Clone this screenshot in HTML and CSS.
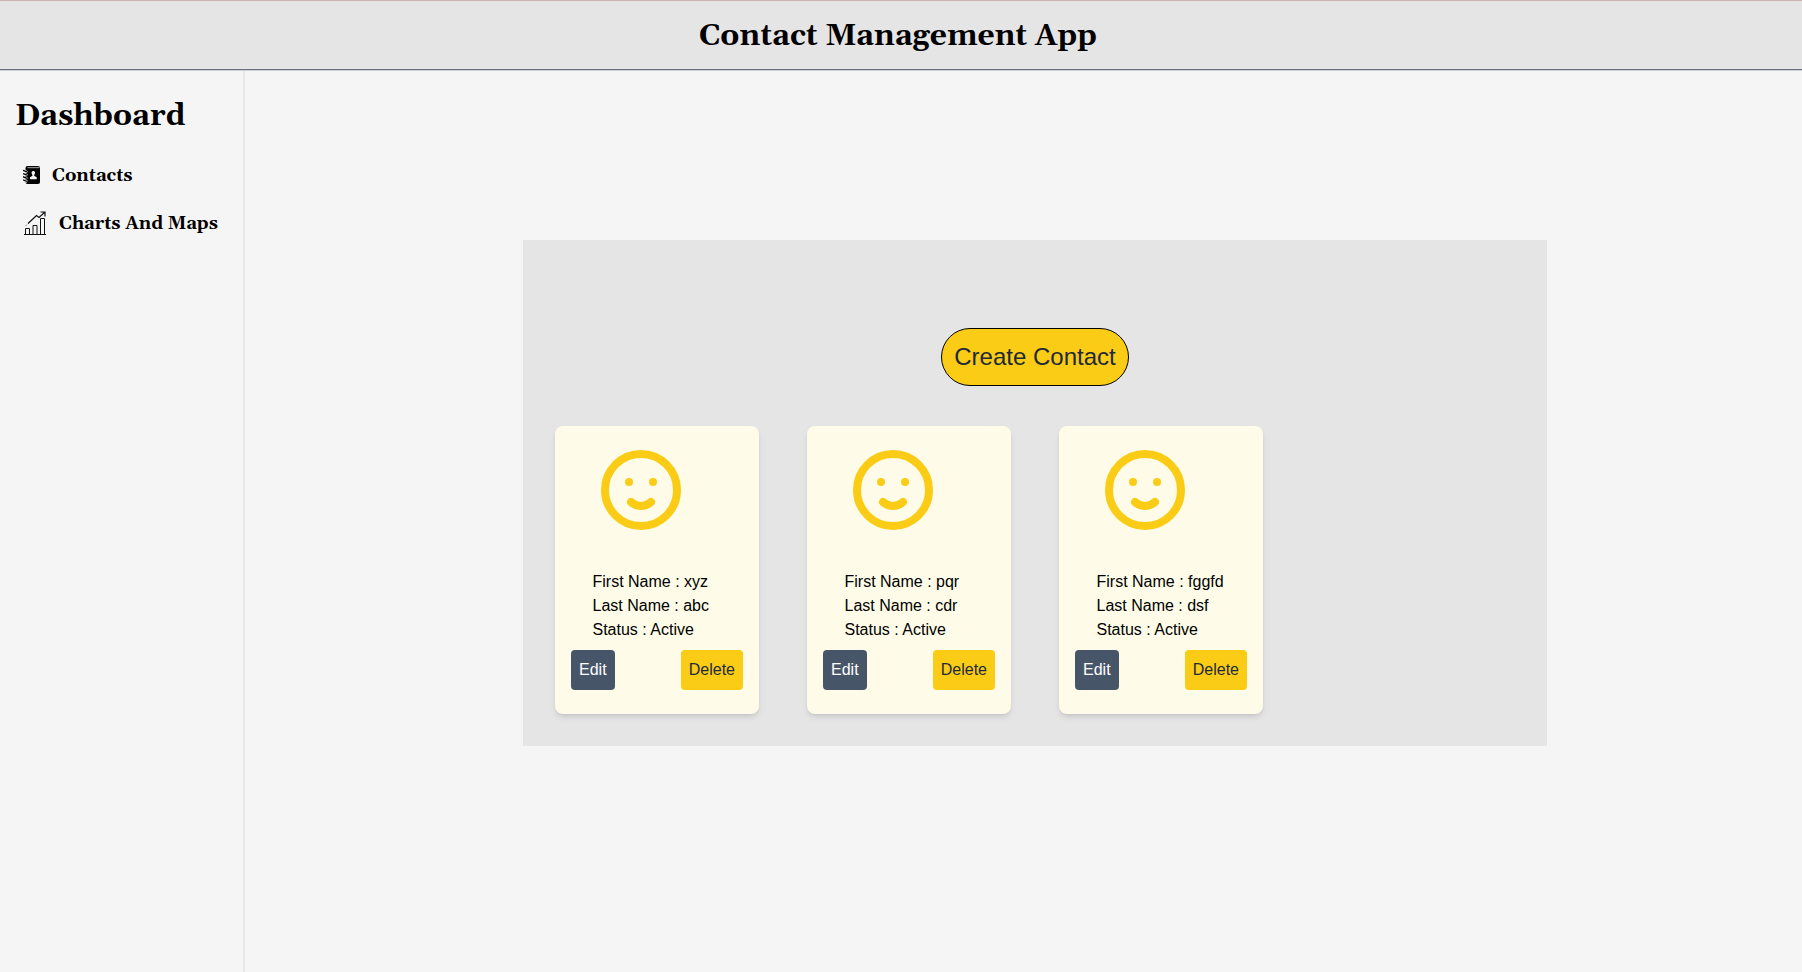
FILE: index.html
```html
<!DOCTYPE html>
<html lang="en">
<head>
<meta charset="utf-8">
<title>Contact Management App</title>
<link rel="stylesheet" href="styles.css">
</head>
<body>
<svg class="defs" width="0" height="0" aria-hidden="true">
  <symbol id="smile" viewBox="0 0 80 80">
    <circle cx="40" cy="40" r="36" fill="none" stroke="currentColor" stroke-width="8"/>
    <circle cx="28" cy="32" r="4" fill="currentColor"/>
    <circle cx="52" cy="32" r="4" fill="currentColor"/>
    <path d="M30 52a14.500 14.500 0 0 0 20 0" fill="none" stroke="currentColor" stroke-width="8" stroke-linecap="round"/>
  </symbol>
</svg>
<header class="header"><h1 class="title">Contact Management App</h1></header>
<div class="layout">
  <aside class="sidebar">
    <h2 class="sidebar-title">Dashboard</h2>
    <nav class="nav">
      <a class="nav-item">
        <svg class="icon-book" viewBox="0 0 18 18">
          <path d="M4.500 0H15a2 2 0 0 1 2 2v14a2 2 0 0 1-2 2H4.500a2 2 0 0 1-2-2V2a2 2 0 0 1 2-2z" fill="#000"/>
          <path d="M4.500 1.700h12" stroke="#f5f5f5" stroke-width=".7"/>
          <path d="M0 4.500l4.300 1.600M0 7.700l4.300 1.600M0 10.900l4.300 1.600M0 14.100l4.300 1.600" stroke="#f5f5f5" stroke-width="2.300"/>
          <path d="M0 4.300l4 1.600M0 7.500l4 1.600M0 10.700l4 1.600M0 13.900l4 1.600" stroke="#000" stroke-width="1.300"/>
          <path d="M10.300 5a1.800 1.800 0 0 1 1.300 3l-.5 1.700 2.600 1.500v2H7v-2l2.500-1.500L9 8a1.800 1.800 0 0 1 1.300-3z" fill="#f5f5f5"/>
        </svg>
        <span class="label">Contacts</span>
      </a>
      <a class="nav-item nav-charts">
        <svg class="icon-chart" viewBox="0 0 24 24" fill="none" stroke="#111" stroke-width="1">
          <path d="M1 23.500h22M2.500 23v-5.500h4V23M10 23v-8.500h4V23M17.500 23V7.500h4V23"/>
          <path d="M5 12.500l8.500-8 2.500 2L22 1M17.500 1h4.500v4.500" stroke-width="1.200"/>
          <path d="M3 14.500l.7-.7"/>
        </svg>
        <span class="label">Charts And Maps</span>
      </a>
    </nav>
  </aside>
  <main class="main">
    <section class="panel">
      <button class="create">Create Contact</button>
      <div class="cards">
        <article class="card">
          <svg class="face"><use href="#smile"/></svg>
          <div class="details"><p>First Name : xyz</p><p>Last Name : abc</p><p>Status : Active</p></div>
          <div class="actions"><button class="btn edit">Edit</button><button class="btn delete">Delete</button></div>
        </article>
        <article class="card">
          <svg class="face"><use href="#smile"/></svg>
          <div class="details"><p>First Name : pqr</p><p>Last Name : cdr</p><p>Status : Active</p></div>
          <div class="actions"><button class="btn edit">Edit</button><button class="btn delete">Delete</button></div>
        </article>
        <article class="card">
          <svg class="face"><use href="#smile"/></svg>
          <div class="details"><p>First Name : fggfd</p><p>Last Name : dsf</p><p>Status : Active</p></div>
          <div class="actions"><button class="btn edit">Edit</button><button class="btn delete">Delete</button></div>
        </article>
      </div>
    </section>
  </main>
</div>
</body>
</html>
```
FILE: styles.css
```css
* { box-sizing: border-box; margin: 0; padding: 0; }
body {
  height: 972px;
  display: flex;
  flex-direction: column;
  overflow: hidden;
  background: #f5f5f5;
  color: #000;
  font: 16px/24px "Liberation Sans", Arial, sans-serif;
}
.defs { display: none; }
.header {
  height: 70px;
  flex: none;
  display: flex;
  justify-content: center;
  padding: 17px 6px 0 0;
  background: #e5e5e5;
  border-top: 1px solid #c8b4b0;
  border-bottom: 1px solid #6b7280;
  box-shadow: 0 1px 0 #cbd0d8;
}
.title, .sidebar-title, .nav { font-family: Georgia, Gelasio, "Liberation Serif", serif; font-weight: 700; }
.title { font-size: 30px; line-height: 36px; white-space: nowrap; }
.layout { flex: 1; display: flex; }
.sidebar {
  width: 245px;
  margin-top: 1px;
  padding: 27px 0 0 15px;
  border-right: 2px solid #e5e7eb;
}
.sidebar-title { font-size: 30px; line-height: 36px; }
.nav { margin-top: 27px; font-size: 18px; line-height: 28px; white-space: nowrap; }
.nav-item { display: flex; align-items: center; height: 28px; padding-left: 8px; }
.nav-charts { margin-top: 20px; }
.icon-book { width: 18px; height: 18px; margin-right: 11px; }
.icon-chart { width: 24px; height: 24px; margin-right: 12px; }
.label { padding-top: 2px; }
.main { flex: 1; padding: 170px 0 0 278px; }
.panel {
  width: 1024px;
  height: 506px;
  padding: 88px 32px 0;
  background: #e5e5e5;
  display: flex;
  flex-direction: column;
  align-items: center;
}
.create {
  width: 188px;
  height: 58px;
  border: 1px solid #000;
  border-radius: 29px;
  background: #facc15;
  color: #1f2937;
  font: 24px/32px "Liberation Sans", Arial, sans-serif;
  white-space: nowrap;
}
.cards { align-self: stretch; display: flex; gap: 48px; margin-top: 40px; }
.card {
  width: 204px;
  height: 288px;
  padding: 24px 16px;
  background: #fefce8;
  border-radius: 8px;
  box-shadow: 0 4px 6px -1px rgba(0,0,0,.1), 0 2px 4px -2px rgba(0,0,0,.1);
}
.face { display: block; width: 80px; height: 80px; margin-left: 30px; color: #facc15; }
.details { margin: 40px 0 8px 21.500px; }
.actions { display: flex; justify-content: space-between; }
.btn { height: 40px; padding: 0 8px; border: 0; border-radius: 4px; font: inherit; }
.edit { background: #475569; color: #fff; }
.delete { background: #facc15; color: #1f2937; }
```
